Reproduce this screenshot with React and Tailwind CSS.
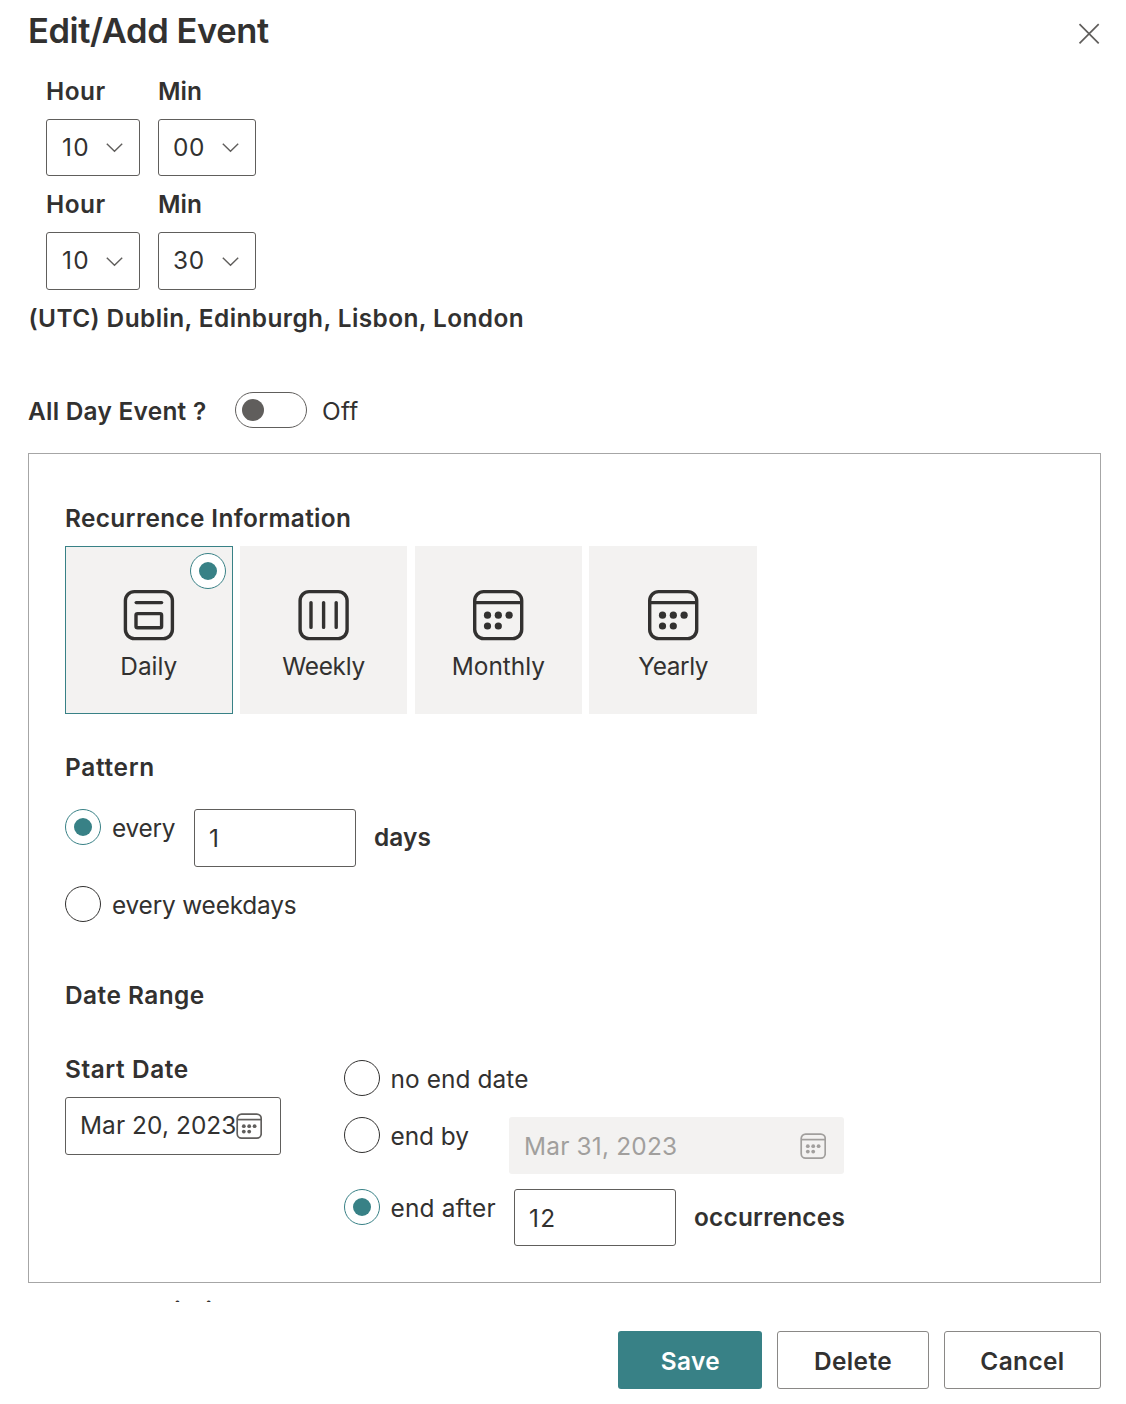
import React from "react";

const LABEL = "block whitespace-pre text-[24.4px] leading-9 font-semibold";
const TEXT = "block whitespace-pre text-[24.4px] leading-9 font-normal";

function Chevron() {
  return (
    <svg width="18" height="11" viewBox="0 0 18 11" fill="none" stroke="#605e5c" strokeWidth="1.4">
      <path d="M1.8 1.7 9.5 9.3 17.2 1.7" />
    </svg>
  );
}

function TimeSelect({ label, value, labelClass, boxClass, valueClass }) {
  return (
    <div>
      <span className={`${LABEL} ${labelClass}`}>{label}</span>
      <div className={`mt-2.5 flex items-center justify-between rounded-[3px] border border-[#605e5c] pr-4 ${boxClass}`}>
        <span className={`${TEXT} pb-0.5 ${valueClass}`}>{value}</span>
        <Chevron />
      </div>
    </div>
  );
}

function Radio({ checked }) {
  return (
    <span className={`flex size-9 shrink-0 items-center justify-center rounded-full border bg-white ${checked ? "border-[#388186]" : "border-[#323130]"}`}>
      {checked && <span className="size-[18px] rounded-full bg-[#388186]" />}
    </span>
  );
}

function DayIcon() {
  return (
    <svg width="52" height="52" viewBox="0 0 52 52" fill="none" stroke="#323130" strokeWidth="3.4">
      <rect x="2.4" y="2.6" width="47" height="47" rx="9" />
      <path d="M13.2 13.6h25.4" strokeLinecap="round" />
      <rect x="13" y="24.6" width="25.6" height="14.2" rx="1.6" />
    </svg>
  );
}

function WeekIcon() {
  return (
    <svg width="52" height="52" viewBox="0 0 52 52" fill="none" stroke="#323130" strokeWidth="3.4">
      <rect x="2.1" y="2.6" width="47" height="47" rx="9" />
      <path d="M13 13.6v24.8M25.6 13.6v24.8M38.2 13.6v24.8" strokeLinecap="round" />
    </svg>
  );
}

function CalendarIcon() {
  return (
    <svg width="52" height="52" viewBox="0 0 52 52" fill="none" stroke="#323130" strokeWidth="3.4">
      <rect x="2.7" y="2.6" width="47" height="47" rx="9" />
      <path d="M2.7 13.6h47" />
      <g fill="#323130" stroke="none">
        <circle cx="15.5" cy="26.2" r="3.6" />
        <circle cx="26.3" cy="26.2" r="3.6" />
        <circle cx="37.1" cy="26.2" r="3.6" />
        <circle cx="15.5" cy="37" r="3.6" />
        <circle cx="26.3" cy="37" r="3.6" />
      </g>
    </svg>
  );
}

function SmallCalendar({ color }) {
  return (
    <svg width="26" height="26" viewBox="0 0 26 26" fill="none" stroke={color} strokeWidth="1.7" className="shrink-0">
      <rect x="1.2" y="1.1" width="24" height="24" rx="4.4" />
      <path d="M1.2 6.6h24" />
      <g fill={color} stroke="none">
        <circle cx="7.8" cy="13.2" r="1.9" />
        <circle cx="13.2" cy="13.2" r="1.9" />
        <circle cx="18.6" cy="13.2" r="1.9" />
        <circle cx="7.8" cy="18.6" r="1.9" />
        <circle cx="13.2" cy="18.6" r="1.9" />
      </g>
    </svg>
  );
}

const PERIODS = [
  { name: "Daily", Icon: DayIcon, tracking: "", selected: true },
  { name: "Weekly", Icon: WeekIcon, tracking: "tracking-[-0.25px]" },
  { name: "Monthly", Icon: CalendarIcon, tracking: "" },
  { name: "Yearly", Icon: CalendarIcon, tracking: "tracking-[-0.4px]" },
];

function PeriodCard({ name, Icon, tracking, selected }) {
  return (
    <div className={`relative flex h-[168px] flex-col items-center border bg-[#f3f2f1] pt-[42px] ${selected ? "border-[#388186]" : "border-[#f3f2f1]"}`}>
      {selected && (
        <div className="absolute top-1.5 right-1.5">
          <Radio checked />
        </div>
      )}
      <Icon />
      <span className={`${TEXT} mt-[7px] ${tracking}`}>{name}</span>
    </div>
  );
}

export default function App() {
  return (
    <div className="flex h-[1404px] w-[1126px] flex-col overflow-hidden bg-white pl-7 pr-[25px] font-[Inter,sans-serif] text-[#323130]">
      <header className="flex justify-between pt-[7px]">
        <h1 className="whitespace-pre text-[34.5px] leading-[48px] font-semibold tracking-[-0.4px]">Edit/Add Event</h1>
        <svg width="22" height="22" viewBox="0 0 22 22" fill="none" stroke="#605e5c" strokeWidth="1.7" className="mt-4 mr-[1px]">
          <path d="M1.5 1.2 20.7 20.4M20.7 1.2 1.5 20.4" />
        </svg>
      </header>

      <main className="h-[1247px] overflow-hidden">
        <div className="mt-[18px] ml-[18px] flex gap-[18px]">
          <TimeSelect label="Hour" value="10" labelClass="tracking-[0.5px]" boxClass="h-[57px] w-[94px] pl-[15px]" valueClass="tracking-[1.4px]" />
          <TimeSelect label="Min" value="00" labelClass="tracking-[0.1px]" boxClass="h-[57px] w-[98px] pl-3.5" valueClass="tracking-[0.6px]" />
        </div>
        <div className="mt-2.5 ml-[18px] flex gap-[18px]">
          <TimeSelect label="Hour" value="10" labelClass="tracking-[0.5px]" boxClass="h-[58px] w-[94px] pl-[15px]" valueClass="tracking-[1.4px]" />
          <TimeSelect label="Min" value="30" labelClass="tracking-[0.1px]" boxClass="h-[58px] w-[98px] pl-3.5" valueClass="tracking-[0.6px]" />
        </div>

        <p className={`${LABEL} mt-2.5 pl-[0.5px] tracking-[0.42px]`}>(UTC) Dublin, Edinburgh, Lisbon, London</p>

        <div className="mt-14 flex h-9 items-start">
          <span className={`${LABEL} mt-px w-[207px] tracking-[0.27px]`}>All Day Event ?</span>
          <span className="flex h-9 w-[72px] items-center rounded-full border border-[#605e5c] pl-1.5">
            <span className="size-[22px] rounded-full bg-[#605e5c]" />
          </span>
          <span className={`${TEXT} mt-px ml-[15px] tracking-[0.3px]`}>Off</span>
        </div>

        <section className="mt-[25px] h-[830px] border border-[#a6a6a6] pt-[46px] pl-9">
          <h2 className={`${LABEL} tracking-[0.36px]`}>Recurrence Information</h2>
          <div className="mt-2.5 grid w-[692px] grid-cols-4 gap-[7.3px]">
            {PERIODS.map((p) => <PeriodCard key={p.name} {...p} />)}
          </div>

          <h2 className={`${LABEL} mt-[35px] tracking-[0.7px]`}>Pattern</h2>
          <div className="mt-6 flex items-start">
            <Radio checked />
            <span className={`${TEXT} mt-px w-[93px] pl-[11px] tracking-[-0.25px]`}>every</span>
            <div className="flex h-[58px] w-[162px] items-center rounded-[3px] border border-[#605e5c] pl-3.5">
              <span className={TEXT}>1</span>
            </div>
            <span className={`${LABEL} mt-2.5 ml-[18px] tracking-[0.1px]`}>days</span>
          </div>
          <div className="mt-[19px] flex items-start">
            <Radio />
            <span className={`${TEXT} mt-px ml-[11px] tracking-[-0.18px]`}>every weekdays</span>
          </div>

          <h2 className={`${LABEL} mt-[54px] tracking-[0.48px]`}>Date Range</h2>

          <div className="mt-[38px] flex items-start">
            <div className="w-[279px]">
              <h3 className={`${LABEL} tracking-[0.58px]`}>Start Date</h3>
              <div className="mt-2.5 flex h-[58px] w-[216px] items-center justify-between rounded-[3px] border border-[#605e5c] pl-3.5 pr-[18px]">
                <span className={`${TEXT} w-[156px] pb-0.5 tracking-[0.08px]`}>Mar 20, 2023</span>
                <SmallCalendar color="#605e5c" />
              </div>
            </div>
            <div className="pt-[9px]">
              <div className="flex items-start">
                <Radio />
                <span className={`${TEXT} mt-px ml-[10.5px] tracking-[0.1px]`}>no end date</span>
              </div>
              <div className="mt-5 flex h-[57px] items-start">
                <Radio />
                <span className={`${TEXT} mt-px w-[129px] pl-[10.5px] tracking-[-0.05px]`}>end by</span>
                <div className="flex h-[57px] w-[335px] items-center justify-between rounded-[3px] bg-[#f3f2f1] pl-[15px] pr-[18px] text-[#a19f9d]">
                  <span className={`${TEXT} tracking-[0.2px]`}>Mar 31, 2023</span>
                  <SmallCalendar color="#a19f9d" />
                </div>
              </div>
              <div className="mt-[15px] flex items-start">
                <Radio checked />
                <span className={`${TEXT} mt-px w-[134px] pl-[10.5px] tracking-[0.2px]`}>end after</span>
                <div className="flex h-[57px] w-[162px] items-center rounded-[3px] border border-[#605e5c] pl-3.5">
                  <span className={`${TEXT} tracking-[1.4px]`}>12</span>
                </div>
                <span className={`${LABEL} mt-2.5 ml-[18px] tracking-[0.22px]`}>occurrences</span>
              </div>
            </div>
          </div>
        </section>

        <h2 className={`${LABEL} mt-2.5 tracking-[0.36px]`}>Event Description</h2>
      </main>

      <footer className="mt-[29px] flex justify-end gap-[15px]">
        <button className={`${LABEL} flex h-[58px] w-36 items-center justify-center rounded-[3px] bg-[#388186] pt-0.5 pl-px tracking-[0.38px] text-white`}>Save</button>
        <button className={`${LABEL} flex h-[58px] w-[152px] items-center justify-center rounded-[3px] border border-[#8a8886] pt-0.5 tracking-[0.4px]`}>Delete</button>
        <button className={`${LABEL} flex h-[58px] w-[157px] items-center justify-center rounded-[3px] border border-[#8a8886] pt-0.5 tracking-[0.4px]`}>Cancel</button>
      </footer>
    </div>
  );
}
